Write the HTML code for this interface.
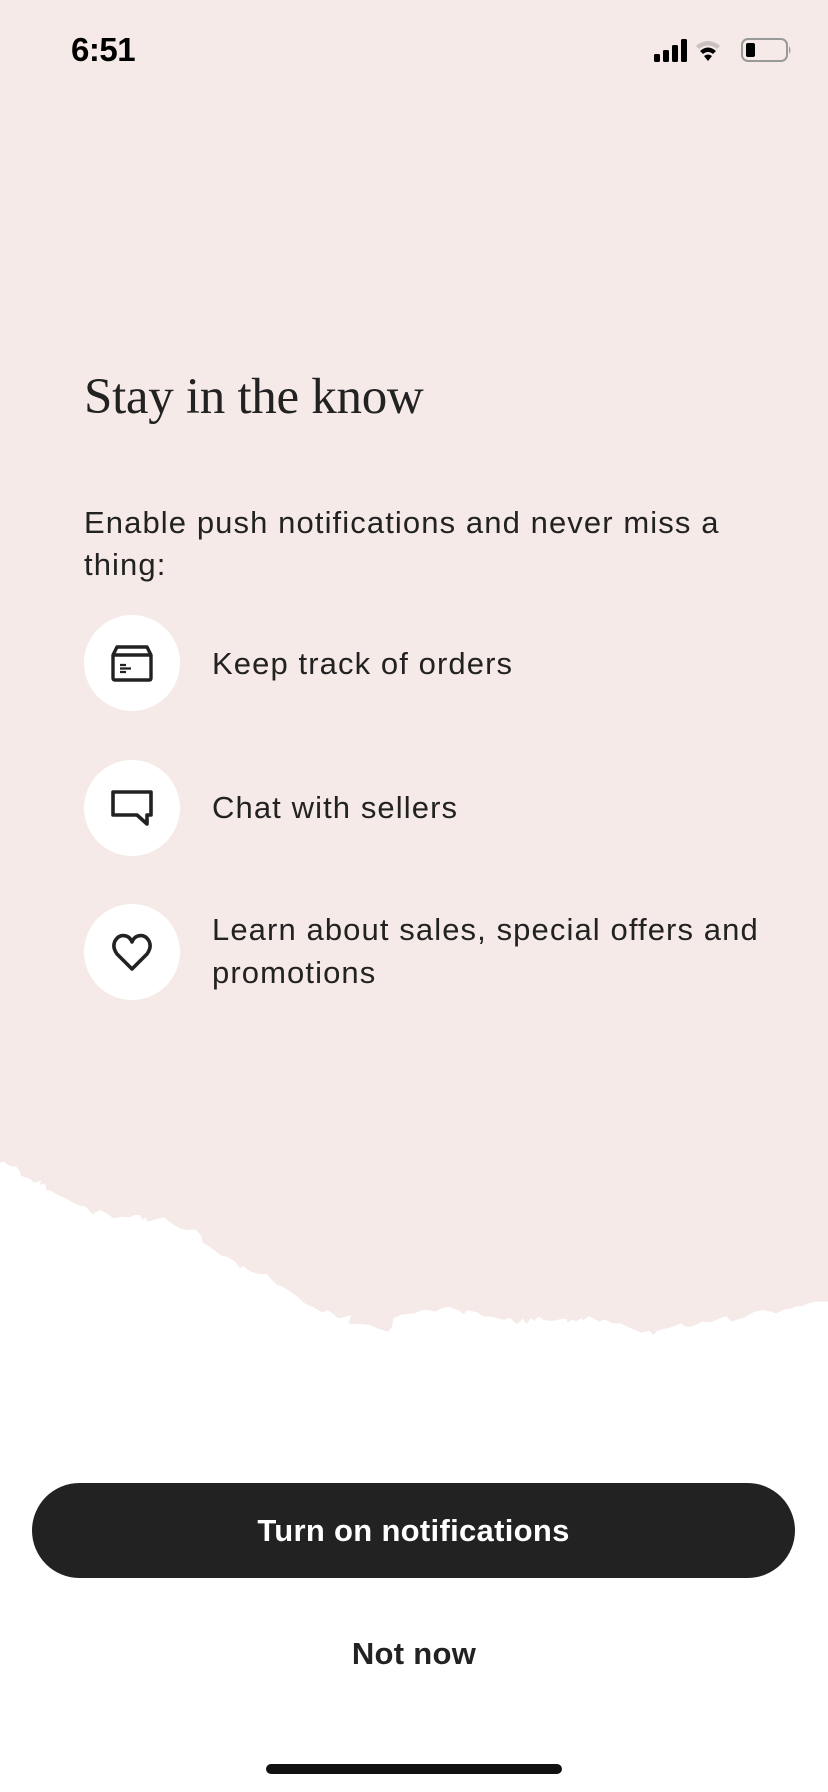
<!DOCTYPE html>
<html><head><meta charset="utf-8"><style>
html,body{margin:0;padding:0}
body{width:828px;height:1792px;position:relative;overflow:hidden;background:#fff;font-family:"Liberation Sans",sans-serif;color:#222}
.pink{position:absolute;left:0;top:0;width:828px;height:1360px;background:#f5eae7}
.abs{position:absolute}
.time{left:71px;top:31px;font-size:33px;font-weight:bold;color:#000;letter-spacing:-0.5px}
h1{position:absolute;left:84px;top:368px;margin:0;font-family:"Liberation Serif",serif;font-weight:normal;font-size:51px;letter-spacing:-0.3px;color:#222}
.body{left:84px;top:502px;width:720px;font-size:31px;line-height:42px;color:#222;letter-spacing:1.1px;white-space:nowrap}
.circ{position:absolute;left:84px;width:96px;height:96px;border-radius:50%;background:#fff}
.circ svg{position:absolute;left:24px;top:24px}
.item{position:absolute;left:212px;font-size:31px;line-height:43px;width:620px;letter-spacing:1.1px}
.btn{position:absolute;left:32px;top:1483px;width:763px;height:95px;border-radius:48px;background:#222;color:#fff;font-size:31px;font-weight:bold;text-align:center;line-height:95px;letter-spacing:0.3px}
.not{position:absolute;left:0;width:828px;top:1636px;text-align:center;font-size:31px;font-weight:bold;color:#222;letter-spacing:0.3px}
.home{position:absolute;left:266px;top:1764px;width:296px;height:10px;border-radius:5px;background:#111}
</style></head><body>
<div class="pink"></div>
<svg class="abs" style="left:0;top:1140px" width="828" height="220" viewBox="0 0 1568 660" preserveAspectRatio="none"><path fill="#fff" d="M0,68 L8,65 L15,75 L25,80 L30,78 L38,95 L40,108 L55,115 L65,128 L78,122 L75,135 L85,130 L88,150 L95,152 L110,165 L125,175 L135,185 L150,197 L162,200 L175,222 L190,210 L200,218 L215,235 L230,230 L245,232 L255,225 L265,225 L270,240 L275,232 L280,245 L295,238 L310,232 L325,250 L340,265 L355,270 L370,268 L380,285 L385,310 L395,318 L405,330 L420,348 L430,350 L445,365 L455,385 L460,378 L475,395 L490,402 L505,402 L518,425 L525,435 L535,440 L550,455 L565,472 L575,488 L583,495 L595,503 L610,517 L620,510 L630,520 L640,535 L655,530 L665,525 L660,552 L685,552 L700,555 L720,568 L735,575 L742,562 L745,535 L760,524 L785,520 L800,510 L810,510 L825,515 L835,505 L850,500 L870,512 L878,523 L885,510 L905,518 L915,530 L930,530 L955,540 L965,533 L978,552 L985,545 L990,535 L997,552 L1005,535 L1012,542 L1020,530 L1030,540 L1045,543 L1060,538 L1072,535 L1075,548 L1085,538 L1090,545 L1100,535 L1105,540 L1115,528 L1135,545 L1145,538 L1160,550 L1175,550 L1195,565 L1215,578 L1230,572 L1237,585 L1245,572 L1268,563 L1290,550 L1298,560 L1310,560 L1330,545 L1345,547 L1375,528 L1385,545 L1410,532 L1420,522 L1430,515 L1445,510 L1460,515 L1470,520 L1485,508 L1500,505 L1505,500 L1520,498 L1530,490 L1545,485 L1568,485 L1568,660 L0,660 Z"/></svg>
<div class="abs time">6:51</div>
<svg class="abs" style="left:652px;top:36px" width="140" height="28" viewBox="0 0 140 28">
<rect x="2" y="18" width="6" height="8" rx="1.5" fill="#000"/><rect x="11" y="14" width="6" height="12" rx="1.5" fill="#000"/><rect x="20" y="9" width="6" height="17" rx="1.5" fill="#000"/><rect x="29" y="3" width="6" height="23" rx="1.5" fill="#000"/>
<path d="M44,10 Q56,0 68,10 L65,13 Q56,6 47,13Z" fill="#c9c1bf"/><path d="M48,15 Q56,8 64,15 L61,18 Q56,14 51,18Z" fill="#000"/><path d="M52,20 Q56,17 60,20 L56,25Z" fill="#000"/>
<rect x="90" y="3" width="45" height="22" rx="6" fill="none" stroke="#999" stroke-width="2"/><rect x="94" y="7" width="9" height="14" rx="2" fill="#000"/><path d="M137,10 Q140,14 137,18Z" fill="#999"/>
</svg>
<h1>Stay in the know</h1>
<div class="abs body">Enable push notifications and never miss a<br>thing:</div>
<div class="circ" style="top:615px"><svg width="48" height="48" viewBox="0 0 48 48" fill="none" stroke="#222" stroke-width="3.4" stroke-linejoin="round"><path d="M5,16 L9,8 L39,8 L43,16 L43,39 Q43,41 41,41 L7,41 Q5,41 5,39 Z M5,16 L43,16"/><path d="M12,26 L18,26 M12,29.5 L23,29.5 M12,33 L18,33" stroke-width="2.2"/></svg></div>
<div class="item" style="top:642px">Keep track of orders</div>
<div class="circ" style="top:760px"><svg width="48" height="48" viewBox="0 0 48 48" fill="none" stroke="#222" stroke-width="3.6" stroke-linejoin="round"><path d="M5,8 L43,8 L43,31 L39,31 L39,40 L29,31 L5,31 Z"/></svg></div>
<div class="item" style="top:786px">Chat with sellers</div>
<div class="circ" style="top:904px"><svg width="48" height="48" viewBox="0 0 48 48" fill="none" stroke="#222" stroke-width="3.6" stroke-linejoin="round"><path d="M24,41 L9,26 Q4,19 7,13 Q11,6 18,8 Q22,9 24,14 Q26,9 30,8 Q37,6 41,13 Q44,19 39,26 Z"/></svg></div>
<div class="item" style="top:908px">Learn about sales, special offers and promotions</div>
<div class="btn">Turn on notifications</div>
<div class="not">Not now</div>
<div class="home"></div>
</body></html>
